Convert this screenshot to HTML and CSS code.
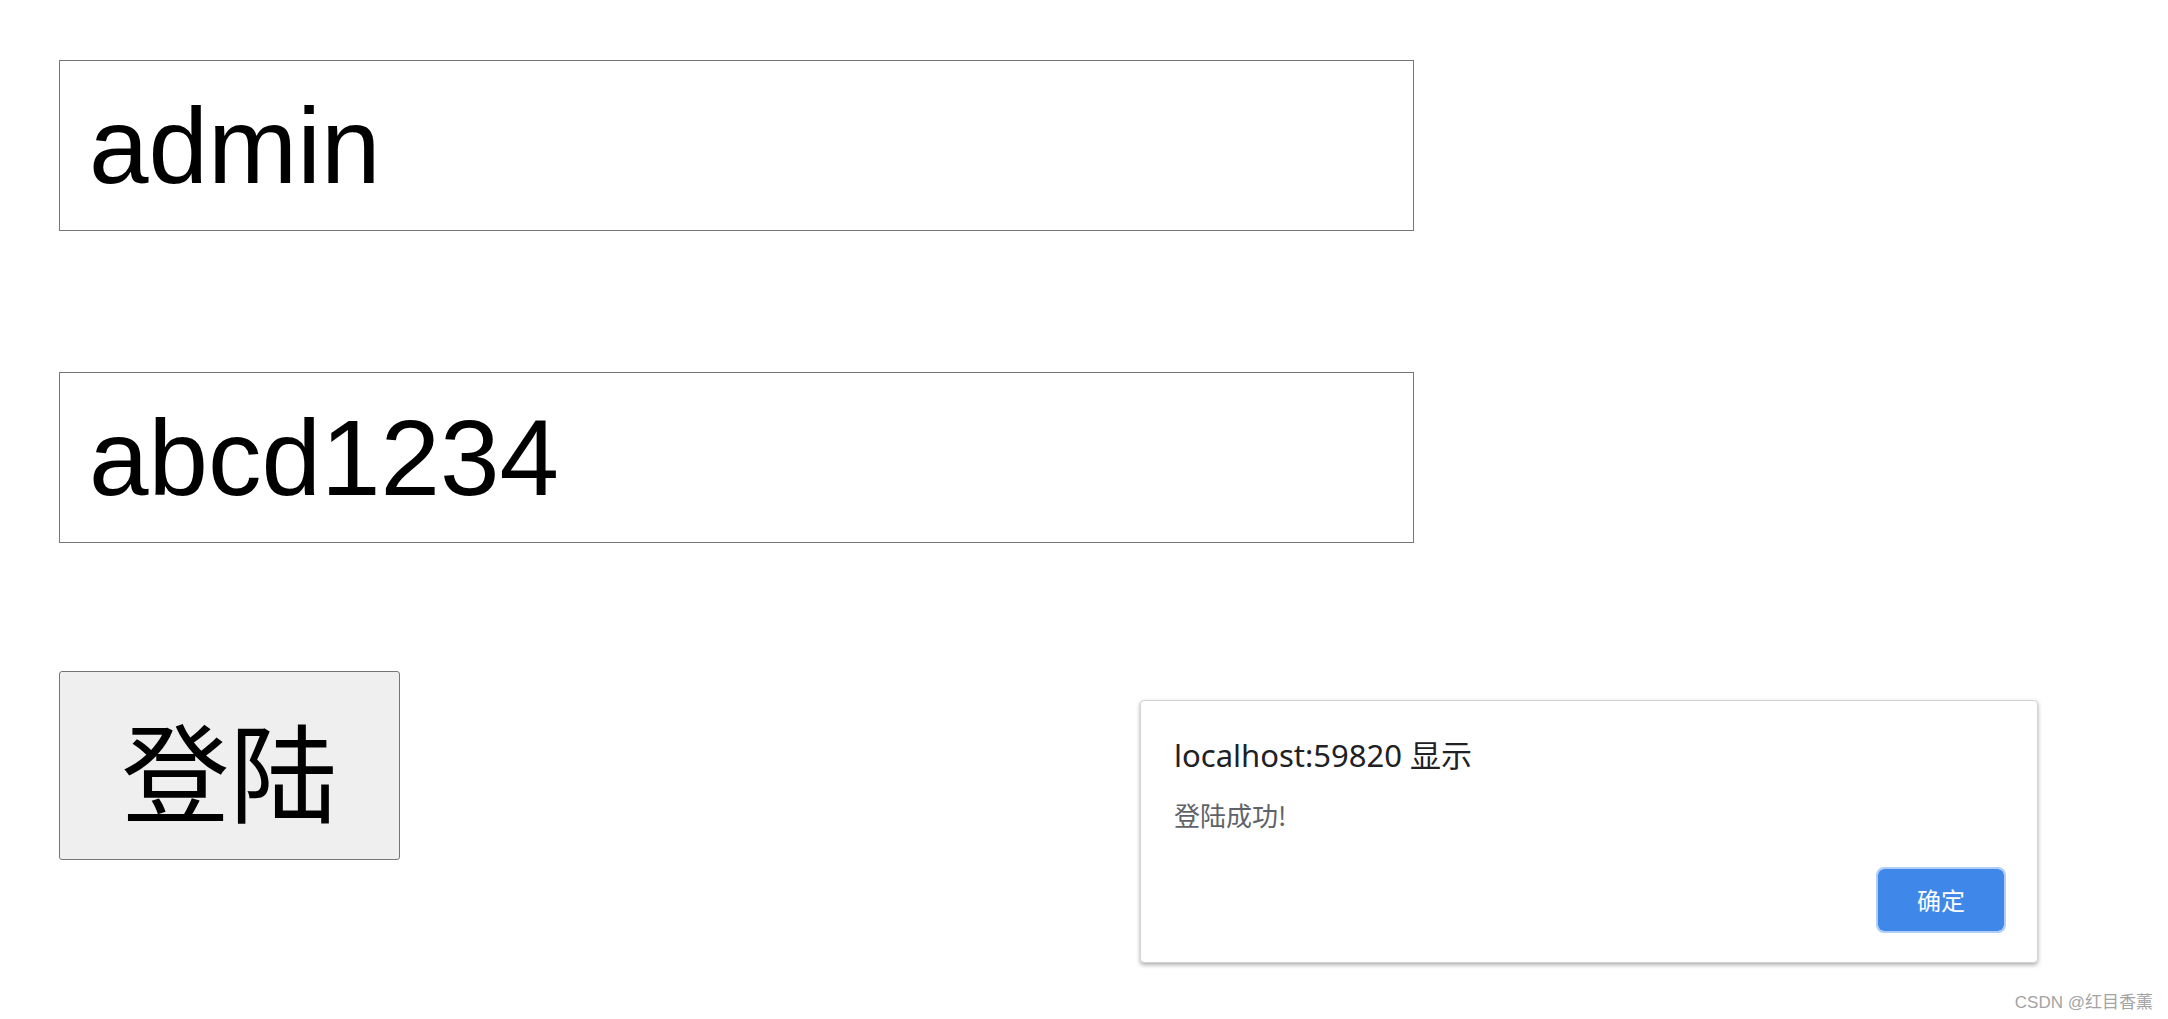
FILE: index.html
```html
<!DOCTYPE html>
<html lang="zh-CN">
<head>
<meta charset="utf-8">
<title>登陆</title>
<link rel="stylesheet" href="styles.css">
</head>
<body>
  <form class="login">
    <input class="field field-user" type="text" value="admin">
    <input class="field field-pass" type="text" value="abcd1234">
    <button class="submit" type="button">登陆</button>
  </form>

  <div class="dialog" role="alertdialog">
    <div class="dialog-title">localhost:59820 显示</div>
    <div class="dialog-message">登陆成功!</div>
    <div class="dialog-actions">
      <button class="dialog-ok" type="button">确定</button>
    </div>
  </div>

  <div class="watermark">CSDN @红目香薰</div>
</body>
</html>
```

FILE: styles.css
```css
html, body {
  margin: 0;
  padding: 0;
  background: #ffffff;
}

body {
  width: 2168px;
  height: 1019px;
  overflow: hidden;
  font-family: "Liberation Sans", Arial, sans-serif;
}

.login {
  display: flex;
  flex-direction: column;
  align-items: flex-start;
  padding: 60px 0 0 59px;
}

.field {
  box-sizing: border-box;
  width: 1355px;
  height: 171px;
  margin: 0;
  padding: 0 0 0 29px;
  border: 1px solid #767676;
  border-radius: 0;
  background: #ffffff;
  color: #000000;
  font-family: "Liberation Sans", Arial, sans-serif;
  font-size: 107px;
  outline: none;
}

.field-user {
  margin-bottom: 141px;
}

.field-pass {
  margin-bottom: 128px;
}

.submit {
  box-sizing: border-box;
  width: 341px;
  height: 189px;
  margin: 0;
  padding: 5px 0 0 0;
  border: 1px solid #767676;
  border-radius: 3px;
  background: #efefef;
  color: #000000;
  font-family: "Noto Sans CJK SC", "Noto Sans", sans-serif;
  font-size: 108px;
  line-height: 1;
  display: flex;
  align-items: center;
  justify-content: center;
}

.dialog {
  position: absolute;
  left: 1140px;
  top: 700px;
  box-sizing: border-box;
  width: 898px;
  height: 263px;
  padding: 34px 31px 0 33px;
  background: #ffffff;
  border: 1px solid #d2d2d2;
  border-radius: 4px;
  box-shadow: 0 2px 4px rgba(0, 0, 0, 0.32);
  display: flex;
  flex-direction: column;
}

.dialog-title {
  font-family: "Noto Sans", "Noto Sans CJK SC", sans-serif;
  font-size: 31px;
  line-height: 40px;
  color: #202124;
}

.dialog-message {
  margin-top: 22px;
  font-family: "Noto Sans CJK SC", "Noto Sans", sans-serif;
  font-size: 26px;
  line-height: 36px;
  color: #5f6368;
}

.dialog-actions {
  display: flex;
  justify-content: flex-end;
  margin-top: 34px;
}

.dialog-ok {
  box-sizing: border-box;
  width: 130px;
  height: 66px;
  margin: 0;
  padding: 0;
  border: 2px solid #b1cdf7;
  border-radius: 8px;
  background: #3f88ea;
  background-clip: padding-box;
  color: #ffffff;
  font-family: "Noto Sans CJK SC", "Noto Sans", sans-serif;
  font-size: 24px;
  line-height: 1;
  display: flex;
  align-items: center;
  justify-content: center;
}

.watermark {
  position: absolute;
  right: 15px;
  bottom: 6px;
  font-family: "Liberation Sans", "Noto Sans CJK SC", sans-serif;
  font-size: 17px;
  line-height: 20px;
  color: #a3a3a3;
}
```
